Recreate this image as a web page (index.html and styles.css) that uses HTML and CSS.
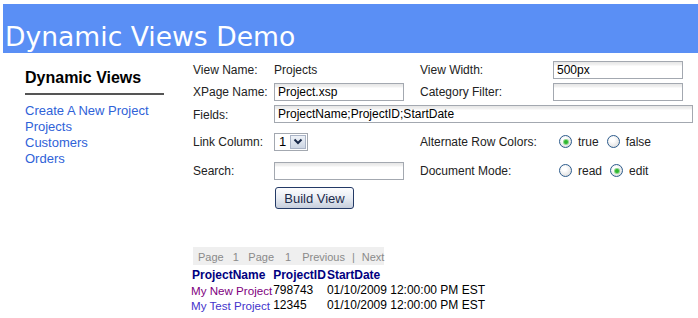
FILE: index.html
```html
<!DOCTYPE html>
<html lang="en">
<head>
    <meta charset="UTF-8">
    <title>Dynamic Views Demo</title>
    <link rel="stylesheet" href="styles.css">
</head>
<body>
    <div class="banner"><h1>Dynamic Views Demo</h1></div>

    <div class="page">
        <div class="sidebar">
            <h2>Dynamic Views</h2>
            <ul class="nav">
                <li><a href="#">Create A New Project</a></li>
                <li><a href="#">Projects</a></li>
                <li><a href="#">Customers</a></li>
                <li><a href="#">Orders</a></li>
            </ul>
        </div>

        <div class="main">
            <div class="form">
                <span class="label">View Name:</span>
                <span class="value">Projects</span>
                <span class="label">View Width:</span>
                <span class="field"><span class="input">500px</span></span>

                <span class="label">XPage Name:</span>
                <span class="field"><span class="input">Project.xsp</span></span>
                <span class="label">Category Filter:</span>
                <span class="field"><span class="input"></span></span>

                <span class="label label-top">Fields:</span>
                <span class="field wide"><span class="input">ProjectName;ProjectID;StartDate</span></span>

                <span class="label">Link Column:</span>
                <span class="field">
                    <span class="select">1<span class="arrow"><svg width="10" height="7" viewBox="0 0 10 7"><path d="M1.5 1.5 L5 5 L8.5 1.5" fill="none" stroke="#1a2a4a" stroke-width="2"/></svg></span></span>
                </span>
                <span class="label">Alternate Row Colors:</span>
                <span class="field radios">
                    <span class="radio checked"></span><span class="opt">true</span>
                    <span class="radio"></span><span class="opt">false</span>
                </span>

                <span class="label">Search:</span>
                <span class="field"><span class="input"></span></span>
                <span class="label">Document Mode:</span>
                <span class="field radios">
                    <span class="radio"></span><span class="opt">read</span>
                    <span class="radio checked"></span><span class="opt">edit</span>
                </span>

                <span></span>
                <span class="field"><button class="build">Build View</button></span>
            </div>

            <div class="pager">
                <span>Page</span>
                <span class="num">1</span>
                <span class="page2">Page</span>
                <span class="num2">1</span>
                <span class="prev">Previous</span>
                <span class="sep">|</span>
                <span class="next">Next</span>
            </div>

            <table class="view">
                <tr>
                    <th>ProjectName</th><th>ProjectID</th><th>StartDate</th>
                </tr>
                <tr>
                    <td class="name"><a class="visited" href="#">My New Project</a></td><td class="id">798743</td><td class="date">01/10/2009 12:00:00 PM EST</td>
                </tr>
                <tr>
                    <td class="name"><a href="#">My Test Project</a></td><td class="id">12345</td><td class="date">01/10/2009 12:00:00 PM EST</td>
                </tr>
            </table>
        </div>
    </div>
</body>
</html>
```

FILE: styles.css
```css
body {
    margin: 4px 0 0 3px;
    font-family: 'Liberation Sans', Arial, sans-serif;
    color: #222;
    background: #fff;
    overflow: hidden;
}
.banner {
    background-color: #5a8ff5;
    height: 31px;
    padding-top: 18px;
}
.banner h1 {
    margin: 0;
    padding-left: 2px;
    font-family: 'DejaVu Sans', Verdana, sans-serif;
    font-weight: normal;
    font-size: 26.6px;
    line-height: 30px;
    color: #fff;
}
.page {
    display: flex;
}
.sidebar {
    width: 139px;
    margin: 0 26px 0 22px;
    padding-top: 16px;
}
.sidebar h2 {
    margin: 0;
    font-size: 16px;
    line-height: 18px;
    color: #000;
    padding-bottom: 6px;
    border-bottom: 2px solid #555;
}
.nav {
    list-style: none;
    margin: 8px 0 0;
    padding: 0;
    font-size: 13px;
    line-height: 16px;
}
.nav a {
    color: #2f62d8;
    text-decoration: none;
}
.main {
    flex: 1;
    padding-top: 5px;
}
.form {
    display: grid;
    grid-template-columns: 81px 146px 133px 145px;
    grid-template-rows: 23px 22px 22px 33px 25px 30px;
    align-items: center;
    padding-left: 3px;
    font-size: 12px;
    line-height: 14px;
}
.label-top {
    align-self: start;
    padding-top: 5px;
}
.field {
    display: flex;
    align-items: center;
}
.wide {
    grid-column: 2 / 5;
}
.input {
    box-sizing: border-box;
    width: 130px;
    height: 18px;
    padding: 1px 3px 0;
    border: 1px solid #a3a8b0;
    background: linear-gradient(#e6e6e6 0, #f2f2f2 3px, #fff 4px);
    font-size: 12px;
    line-height: 15px;
    color: #000;
}
.wide .input {
    width: 419px;
}
.select {
    box-sizing: border-box;
    display: flex;
    align-items: center;
    justify-content: space-between;
    width: 34px;
    height: 18px;
    padding: 0 1px 0 4px;
    border: 1px solid #a3a8b0;
    font-size: 13px;
    color: #000;
}
.arrow {
    box-sizing: border-box;
    display: flex;
    align-items: center;
    justify-content: center;
    width: 16px;
    height: 14px;
    border: 1px solid #aab4c6;
    background: linear-gradient(#eef2f8, #cdd6e4);
}
.radios .radio {
    box-sizing: border-box;
    width: 13px;
    height: 13px;
    margin: 0 6px;
    border: 1px solid #2c5b8c;
    border-radius: 50%;
    background: radial-gradient(circle at 40% 35%, #fff 20%, #d4d4d4 100%);
    display: flex;
    align-items: center;
    justify-content: center;
}
.radios .opt + .radio {
    margin-left: 8px;
}
.radio.checked::after {
    content: "";
    width: 4px;
    height: 4px;
    border-radius: 50%;
    background: #2fb82f;
    box-shadow: 0 0 0 1px #8fd68f;
}
.build {
    box-sizing: border-box;
    width: 79px;
    height: 22px;
    margin: 0 0 0 1px;
    padding: 0;
    border: 1px solid #243a66;
    border-radius: 3px;
    background: linear-gradient(#fdfdfe, #e8ecf3 50%, #c6cedc);
    font-family: 'Liberation Sans', Arial, sans-serif;
    font-size: 13px;
    color: #1b2a4a;
}
.pager {
    display: inline-flex;
    margin: 34px 0 0 3px;
    height: 15px;
    padding: 3px 0 0 5px;
    background: #efefef;
    font-size: 11px;
    line-height: 15px;
    color: #8a8a8a;
}
.pager .num { margin-left: 9px; }
.pager .page2 { margin-left: 9.5px; }
.pager .num2 { margin-left: 11px; }
.pager .prev { margin-left: 11px; }
.pager .sep { margin-left: 7px; }
.pager .next { margin-left: 7px; }
.view {
    margin-top: 3px;
    border-collapse: collapse;
    font-size: 12px;
    line-height: 15px;
}
.view th {
    padding: 0 0 0 1px;
    text-align: left;
    color: #000080;
}
.view th:first-child {
    padding-left: 2px;
}
.view td {
    padding: 0 0 0 1px;
    color: #000;
}
.view .name {
    font-size: 11.6px;
}
.view .date {
    font-size: 12px;
}
.view a {
    color: #4433cc;
    text-decoration: none;
}
.view a.visited {
    color: #800080;
}
```
